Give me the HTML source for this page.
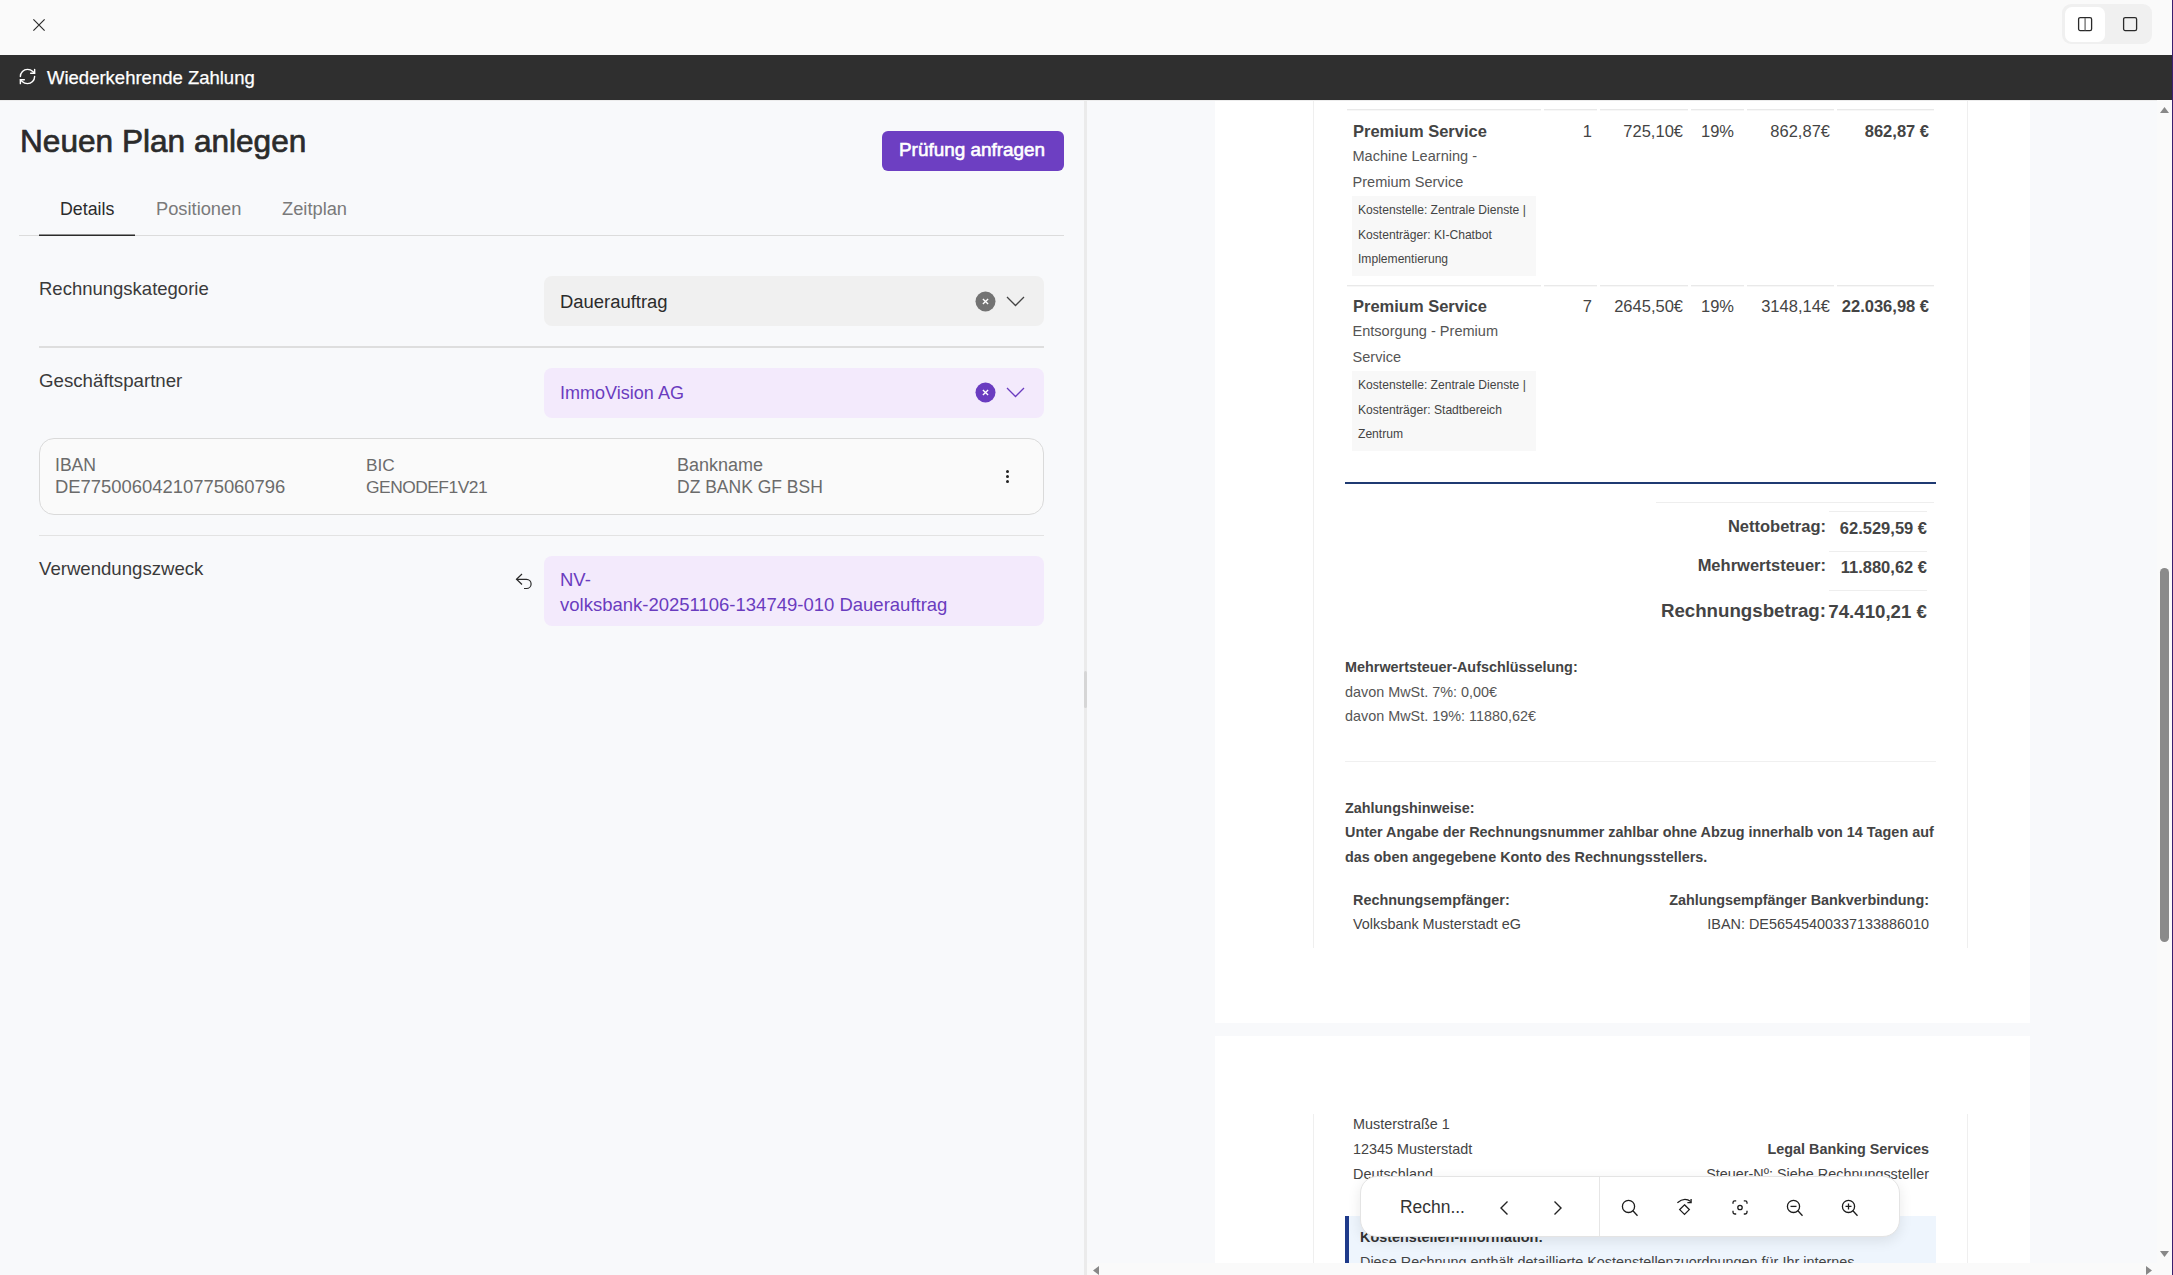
<!DOCTYPE html>
<html><head><meta charset="utf-8"><title>Wiederkehrende Zahlung</title>
<style>
html,body{margin:0;padding:0;width:2173px;height:1275px;overflow:hidden;background:#fafafa;}
body{position:relative;font-family:"Liberation Sans",sans-serif;}
.r{position:absolute;box-sizing:content-box;}
.t{position:absolute;white-space:nowrap;line-height:normal;font-family:"Liberation Sans",sans-serif;}
svg.r{overflow:visible;}
</style></head><body>
<div class="r" style="left:0px;top:0px;width:2173px;height:55px;background:#fafafa;"></div>
<div class="r" style="left:0px;top:55px;width:2173px;height:45px;background:#2f2f2f;"></div>
<div class="r" style="left:0px;top:100px;width:1084px;height:1175px;background:#f8f9fb;"></div>
<div class="r" style="left:1084px;top:100px;width:3px;height:1175px;background:#ebebeb;"></div>
<div class="r" style="left:1084px;top:671px;width:3px;height:37px;background:#d6d6d6;border-radius:2px;"></div>
<div class="r" style="left:1087px;top:100px;width:1085px;height:1175px;background:#f8f9fb;"></div>
<div class="r" style="left:2172px;top:0px;width:1px;height:1275px;background:#3a1f6e;"></div>
<svg class="r" style="left:31px;top:17px" width="16" height="16" viewBox="0 0 16 16"><path d="M2.4 2.4 L13.6 13.6 M13.6 2.4 L2.4 13.6" stroke="#2a2a2a" stroke-width="1.15" fill="none"/></svg>
<div class="r" style="left:2062px;top:4px;width:90px;height:40px;background:#f0f0f0;border-radius:9px;"></div>
<div class="r" style="left:2065px;top:7px;width:40px;height:35px;background:#ffffff;border-radius:7px;"></div>
<svg class="r" style="left:2077px;top:16px" width="16" height="16" viewBox="0 0 16 16"><rect x="1.6" y="1.6" width="13" height="13" rx="1.6" stroke="#2a2a2a" stroke-width="1.3" fill="none"/><line x1="8.1" y1="2" x2="8.1" y2="14.2" stroke="#777" stroke-width="1.4"/></svg>
<svg class="r" style="left:2122px;top:16px" width="16" height="16" viewBox="0 0 16 16"><rect x="1.6" y="1.6" width="13" height="13" rx="1.6" stroke="#2a2a2a" stroke-width="1.3" fill="none"/></svg>
<svg class="r" style="left:18.4px;top:67.4px" width="19" height="19" viewBox="0 0 24 24" fill="none" stroke="#fff" stroke-width="1.8" stroke-linecap="round" stroke-linejoin="round"><path d="M3 12a9 9 0 0 1 9-9 9.75 9.75 0 0 1 6.74 2.74L21 8"/><path d="M21 3v5h-5"/><path d="M21 12a9 9 0 0 1-9 9 9.75 9.75 0 0 1-6.74-2.74L3 16"/><path d="M8 16H3v5"/></svg>
<div class="t" style="left:47px;top:67.26px;font-size:18.5px;font-weight:normal;color:#ffffff;-webkit-text-stroke:0.25px #fff;">Wiederkehrende Zahlung</div>
<div class="t" style="left:20px;top:123.40px;font-size:31.6px;font-weight:normal;color:#2b2b2b;-webkit-text-stroke:0.7px #2b2b2b;">Neuen Plan anlegen</div>
<div class="r" style="left:882px;top:131px;width:182px;height:40px;background:#6d3fc2;border-radius:6px;"></div>
<div class="t" style="left:899px;top:138.90px;font-size:18.9px;font-weight:normal;color:#ffffff;-webkit-text-stroke:0.6px #fff;">Prüfung anfragen</div>
<div class="t" style="left:60px;top:198.89px;font-size:17.8px;font-weight:normal;color:#2b2b2b;">Details</div>
<div class="t" style="left:156px;top:198.44px;font-size:18.3px;font-weight:normal;color:#7a7a7a;">Positionen</div>
<div class="t" style="left:282px;top:198.44px;font-size:18.3px;font-weight:normal;color:#7a7a7a;">Zeitplan</div>
<div class="r" style="left:19px;top:235px;width:1045px;height:1px;background:#dcdcdc;"></div>
<div class="r" style="left:39px;top:234px;width:96px;height:1px;background:#8f8f8f;"></div>
<div class="r" style="left:39px;top:235px;width:96px;height:1px;background:#2b2b2b;"></div>
<div class="t" style="left:39px;top:278.26px;font-size:18.5px;font-weight:normal;color:#3a3a3a;">Rechnungskategorie</div>
<div class="r" style="left:544px;top:276px;width:500px;height:50px;background:#f0f0f0;border-radius:8px;"></div>
<div class="t" style="left:560px;top:291.30px;font-size:18.45px;font-weight:normal;color:#2b2b2b;">Dauerauftrag</div>
<svg class="r" style="left:975px;top:291px" width="21" height="21" viewBox="0 0 21 21"><circle cx="10.5" cy="10.5" r="10" fill="#737373"/><path d="M7.9 7.9 L13.1 13.1 M13.1 7.9 L7.9 13.1" stroke="#fff" stroke-width="1.35"/></svg>
<svg class="r" style="left:1006px;top:295px" width="19" height="13" viewBox="0 0 19 13"><path d="M1 2 L9.5 10.5 L18 2" stroke="#444" stroke-width="1.3" fill="none"/></svg>
<div class="r" style="left:39px;top:346px;width:1005px;height:2px;background:#dedede;"></div>
<div class="t" style="left:39px;top:370.08px;font-size:18.7px;font-weight:normal;color:#3a3a3a;">Geschäftspartner</div>
<div class="r" style="left:544px;top:368px;width:500px;height:50px;background:#f3eafc;border-radius:8px;"></div>
<div class="t" style="left:560px;top:382.67px;font-size:18.04px;font-weight:normal;color:#6a3cbf;">ImmoVision AG</div>
<svg class="r" style="left:975px;top:382px" width="21" height="21" viewBox="0 0 21 21"><circle cx="10.5" cy="10.5" r="10" fill="#6a3cc0"/><path d="M7.9 7.9 L13.1 13.1 M13.1 7.9 L7.9 13.1" stroke="#fff" stroke-width="1.35"/></svg>
<svg class="r" style="left:1006px;top:386px" width="19" height="13" viewBox="0 0 19 13"><path d="M1 2 L9.5 10.5 L18 2" stroke="#6a3cc0" stroke-width="1.3" fill="none"/></svg>
<div class="r" style="left:39px;top:438px;width:1003px;height:75px;border:1px solid #dadada;border-radius:15px;background:#fafafa;"></div>
<div class="t" style="left:55px;top:455.07px;font-size:17.6px;font-weight:normal;color:#6b6b6b;">IBAN</div>
<div class="t" style="left:55px;top:476.33px;font-size:18.42px;font-weight:normal;color:#6b6b6b;">DE77500604210775060796</div>
<div class="t" style="left:366px;top:455.34px;font-size:17.3px;font-weight:normal;color:#6b6b6b;">BIC</div>
<div class="t" style="left:366px;top:477.25px;font-size:17.4px;font-weight:normal;color:#6b6b6b;letter-spacing:-0.5px;">GENODEF1V21</div>
<div class="t" style="left:677px;top:454.71px;font-size:18px;font-weight:normal;color:#6b6b6b;">Bankname</div>
<div class="t" style="left:677px;top:477.16px;font-size:17.5px;font-weight:normal;color:#6b6b6b;">DZ BANK GF BSH</div>
<div class="r" style="left:1006.25px;top:470.1px;width:3px;height:3px;border-radius:50%;background:#222;"></div>
<div class="r" style="left:1006.25px;top:475.2px;width:3px;height:3px;border-radius:50%;background:#222;"></div>
<div class="r" style="left:1006.25px;top:480.2px;width:3px;height:3px;border-radius:50%;background:#222;"></div>
<div class="r" style="left:39px;top:535px;width:1005px;height:1px;background:#e3e3e3;"></div>
<div class="t" style="left:39px;top:558.17px;font-size:18.6px;font-weight:normal;color:#3a3a3a;">Verwendungszweck</div>
<svg class="r" style="left:513px;top:571px" width="21" height="21" viewBox="0 0 21 21"><path d="M9 3 L3.5 8.3 L9 13.5" stroke="#2a2a2a" stroke-width="1.2" fill="none"/><path d="M3.5 8.3 H13.5 A4.5 4.5 0 0 1 13.5 17.5 H11" stroke="#2a2a2a" stroke-width="1.2" fill="none"/></svg>
<div class="r" style="left:544px;top:556px;width:500px;height:70px;background:#f3eafc;border-radius:8px;"></div>
<div class="t" style="left:560px;top:569.26px;font-size:18.5px;font-weight:normal;color:#6a3cbf;">NV-</div>
<div class="t" style="left:560px;top:594.26px;font-size:18.5px;font-weight:normal;color:#6a3cbf;">volksbank-20251106-134749-010 Dauerauftrag</div>
<div class="r" style="left:1215px;top:100px;width:815px;height:923px;background:#ffffff;"></div>
<div class="r" style="left:1215px;top:1036px;width:815px;height:227px;background:#ffffff;"></div>
<div class="r" style="left:1313px;top:100px;width:1px;height:848px;background:#efefef;"></div>
<div class="r" style="left:1967px;top:100px;width:1px;height:848px;background:#efefef;"></div>
<div class="r" style="left:1313px;top:1114px;width:1px;height:149px;background:#efefef;"></div>
<div class="r" style="left:1967px;top:1114px;width:1px;height:149px;background:#efefef;"></div>
<div class="r" style="left:1347px;top:109px;width:194px;height:1px;background:#e9e9e9;"></div>
<div class="r" style="left:1347px;top:110px;width:194px;height:1px;background:#f7f7f7;"></div>
<div class="r" style="left:1544px;top:109px;width:53px;height:1px;background:#e9e9e9;"></div>
<div class="r" style="left:1544px;top:110px;width:53px;height:1px;background:#f7f7f7;"></div>
<div class="r" style="left:1600px;top:109px;width:88px;height:1px;background:#e9e9e9;"></div>
<div class="r" style="left:1600px;top:110px;width:88px;height:1px;background:#f7f7f7;"></div>
<div class="r" style="left:1691px;top:109px;width:53px;height:1px;background:#e9e9e9;"></div>
<div class="r" style="left:1691px;top:110px;width:53px;height:1px;background:#f7f7f7;"></div>
<div class="r" style="left:1747px;top:109px;width:87px;height:1px;background:#e9e9e9;"></div>
<div class="r" style="left:1747px;top:110px;width:87px;height:1px;background:#f7f7f7;"></div>
<div class="r" style="left:1837px;top:109px;width:97px;height:1px;background:#e9e9e9;"></div>
<div class="r" style="left:1837px;top:110px;width:97px;height:1px;background:#f7f7f7;"></div>
<div class="r" style="left:1347px;top:285px;width:194px;height:1px;background:#e9e9e9;"></div>
<div class="r" style="left:1347px;top:286px;width:194px;height:1px;background:#f7f7f7;"></div>
<div class="r" style="left:1544px;top:285px;width:53px;height:1px;background:#e9e9e9;"></div>
<div class="r" style="left:1544px;top:286px;width:53px;height:1px;background:#f7f7f7;"></div>
<div class="r" style="left:1600px;top:285px;width:88px;height:1px;background:#e9e9e9;"></div>
<div class="r" style="left:1600px;top:286px;width:88px;height:1px;background:#f7f7f7;"></div>
<div class="r" style="left:1691px;top:285px;width:53px;height:1px;background:#e9e9e9;"></div>
<div class="r" style="left:1691px;top:286px;width:53px;height:1px;background:#f7f7f7;"></div>
<div class="r" style="left:1747px;top:285px;width:87px;height:1px;background:#e9e9e9;"></div>
<div class="r" style="left:1747px;top:286px;width:87px;height:1px;background:#f7f7f7;"></div>
<div class="r" style="left:1837px;top:285px;width:97px;height:1px;background:#e9e9e9;"></div>
<div class="r" style="left:1837px;top:286px;width:97px;height:1px;background:#f7f7f7;"></div>
<div class="t" style="left:1353px;top:122.07px;font-size:16.5px;font-weight:bold;color:#444;">Premium Service</div>
<div class="t" style="left:1352.5px;top:147.83px;font-size:14.55px;font-weight:normal;color:#555;">Machine Learning -</div>
<div class="t" style="left:1352.5px;top:173.83px;font-size:14.55px;font-weight:normal;color:#555;">Premium Service</div>
<div class="r" style="left:1352px;top:196px;width:184px;height:80px;background:#f8f8f8;"></div>
<div class="t" style="left:1358px;top:203.05px;font-size:12.1px;font-weight:normal;color:#444;">Kostenstelle: Zentrale Dienste |</div>
<div class="t" style="left:1358px;top:228.05px;font-size:12.1px;font-weight:normal;color:#444;">Kostenträger: KI-Chatbot</div>
<div class="t" style="left:1358px;top:252.05px;font-size:12.1px;font-weight:normal;color:#444;">Implementierung</div>
<div class="t" style="right:581px;top:122.07px;font-size:16.5px;font-weight:normal;color:#444;">1</div>
<div class="t" style="right:490px;top:122.07px;font-size:16.5px;font-weight:normal;color:#444;">725,10€</div>
<div class="t" style="left:1701px;top:122.07px;font-size:16.5px;font-weight:normal;color:#444;">19%</div>
<div class="t" style="right:343px;top:122.07px;font-size:16.5px;font-weight:normal;color:#444;">862,87€</div>
<div class="t" style="right:244px;top:122.07px;font-size:16.5px;font-weight:bold;color:#444;">862,87 €</div>
<div class="t" style="left:1353px;top:297.07px;font-size:16.5px;font-weight:bold;color:#444;">Premium Service</div>
<div class="t" style="left:1352.5px;top:322.83px;font-size:14.55px;font-weight:normal;color:#555;">Entsorgung - Premium</div>
<div class="t" style="left:1352.5px;top:348.83px;font-size:14.55px;font-weight:normal;color:#555;">Service</div>
<div class="r" style="left:1352px;top:371px;width:184px;height:80px;background:#f8f8f8;"></div>
<div class="t" style="left:1358px;top:378.05px;font-size:12.1px;font-weight:normal;color:#444;">Kostenstelle: Zentrale Dienste |</div>
<div class="t" style="left:1358px;top:403.05px;font-size:12.1px;font-weight:normal;color:#444;">Kostenträger: Stadtbereich</div>
<div class="t" style="left:1358px;top:427.05px;font-size:12.1px;font-weight:normal;color:#444;">Zentrum</div>
<div class="t" style="right:581px;top:297.07px;font-size:16.5px;font-weight:normal;color:#444;">7</div>
<div class="t" style="right:490px;top:297.07px;font-size:16.5px;font-weight:normal;color:#444;">2645,50€</div>
<div class="t" style="left:1701px;top:297.07px;font-size:16.5px;font-weight:normal;color:#444;">19%</div>
<div class="t" style="right:343px;top:297.07px;font-size:16.5px;font-weight:normal;color:#444;">3148,14€</div>
<div class="t" style="right:244px;top:297.07px;font-size:16.5px;font-weight:bold;color:#444;">22.036,98 €</div>
<div class="r" style="left:1345px;top:482px;width:591px;height:2px;background:#1f3a72;"></div>
<div class="r" style="left:1656px;top:502px;width:278px;height:1px;background:#eeeeee;"></div>
<div class="r" style="left:1829px;top:511px;width:98px;height:1px;background:#eeeeee;"></div>
<div class="r" style="left:1829px;top:551px;width:98px;height:1px;background:#eeeeee;"></div>
<div class="r" style="left:1829px;top:590px;width:98px;height:1px;background:#eeeeee;"></div>
<div class="t" style="right:347px;top:517.07px;font-size:16.5px;font-weight:bold;color:#444;">Nettobetrag:</div>
<div class="t" style="right:246px;top:519.07px;font-size:16.5px;font-weight:bold;color:#444;">62.529,59 €</div>
<div class="t" style="right:347px;top:556.07px;font-size:16.5px;font-weight:bold;color:#444;">Mehrwertsteuer:</div>
<div class="t" style="right:246px;top:558.07px;font-size:16.5px;font-weight:bold;color:#444;">11.880,62 €</div>
<div class="t" style="right:347px;top:600.08px;font-size:18.7px;font-weight:bold;color:#444;">Rechnungsbetrag:</div>
<div class="t" style="right:246px;top:601.08px;font-size:18.7px;font-weight:bold;color:#444;">74.410,21 €</div>
<div class="t" style="left:1345px;top:658.97px;font-size:14.4px;font-weight:bold;color:#444;">Mehrwertsteuer-Aufschlüsselung:</div>
<div class="t" style="left:1345px;top:683.97px;font-size:14.4px;font-weight:normal;color:#555;">davon MwSt. 7%: 0,00€</div>
<div class="t" style="left:1345px;top:707.97px;font-size:14.4px;font-weight:normal;color:#555;">davon MwSt. 19%: 11880,62€</div>
<div class="r" style="left:1345px;top:761px;width:591px;height:1px;background:#f0f0f0;"></div>
<div class="t" style="left:1345px;top:799.97px;font-size:14.4px;font-weight:bold;color:#444;">Zahlungshinweise:</div>
<div class="t" style="left:1345px;top:823.97px;font-size:14.4px;font-weight:bold;color:#444;">Unter Angabe der Rechnungsnummer zahlbar ohne Abzug innerhalb von 14 Tagen auf</div>
<div class="t" style="left:1345px;top:848.97px;font-size:14.4px;font-weight:bold;color:#444;">das oben angegebene Konto des Rechnungsstellers.</div>
<div class="t" style="left:1353px;top:891.97px;font-size:14.4px;font-weight:bold;color:#444;">Rechnungsempfänger:</div>
<div class="t" style="right:244px;top:891.97px;font-size:14.4px;font-weight:bold;color:#444;">Zahlungsempfänger Bankverbindung:</div>
<div class="t" style="left:1353px;top:915.97px;font-size:14.4px;font-weight:normal;color:#444;">Volksbank Musterstadt eG</div>
<div class="t" style="right:244px;top:915.97px;font-size:14.4px;font-weight:normal;color:#444;">IBAN: DE56545400337133886010</div>
<div class="t" style="left:1353px;top:1115.97px;font-size:14.4px;font-weight:normal;color:#444;">Musterstraße 1</div>
<div class="t" style="left:1353px;top:1140.97px;font-size:14.4px;font-weight:normal;color:#444;">12345 Musterstadt</div>
<div class="t" style="left:1353px;top:1165.97px;font-size:14.4px;font-weight:normal;color:#444;">Deutschland</div>
<div class="t" style="right:244px;top:1140.97px;font-size:14.4px;font-weight:bold;color:#444;">Legal Banking Services</div>
<div class="t" style="right:244px;top:1165.97px;font-size:14.4px;font-weight:normal;color:#444;">Steuer-Nº: Siehe Rechnungssteller</div>
<div class="r" style="left:1345px;top:1216px;width:591px;height:47px;background:#eef5fd;"></div>
<div class="r" style="left:1345px;top:1216px;width:4px;height:47px;background:#1e3a8a;"></div>
<div class="t" style="left:1360px;top:1228.97px;font-size:14.4px;font-weight:bold;color:#333;">Kostenstellen-Information:</div>
<div class="t" style="left:1360px;top:1253.97px;font-size:14.4px;font-weight:normal;color:#444;">Diese Rechnung enthält detaillierte Kostenstellenzuordnungen für Ihr internes</div>
<div class="r" style="left:0px;top:100px;width:2172px;height:1px;background:#ececec;"></div>
<div class="r" style="left:2157px;top:100px;width:15px;height:1163px;background:#fafafa;"></div>
<div class="r" style="left:2160px;top:568px;width:9px;height:374px;border-radius:5px;background:#8a8a8a;"></div>
<svg class="r" style="left:2159px;top:106px" width="11" height="8"><path d="M1 7 L5.5 1 L10 7 Z" fill="#888"/></svg>
<svg class="r" style="left:2159px;top:1250px" width="11" height="8"><path d="M1 1 L5.5 7 L10 1 Z" fill="#888"/></svg>
<div class="r" style="left:1087px;top:1263px;width:1085px;height:12px;background:#fafafa;"></div>
<svg class="r" style="left:1092px;top:1265px" width="8" height="11"><path d="M7 1 L1 5.5 L7 10 Z" fill="#888"/></svg>
<svg class="r" style="left:2145px;top:1265px" width="8" height="11"><path d="M1 1 L7 5.5 L1 10 Z" fill="#888"/></svg>
<div class="r" style="left:1360px;top:1176px;width:538px;height:59px;border:1px solid #e4e4e4;border-radius:17px;background:#fff;box-shadow:0 4px 14px rgba(0,0,0,0.09);"></div>
<div class="t" style="left:1400px;top:1197.21px;font-size:17.45px;font-weight:normal;color:#333;">Rechn...</div>
<svg class="r" style="left:1497px;top:1199px" width="14" height="18" viewBox="0 0 14 18"><path d="M10.5 2.5 L4 9 L10.5 15.5" stroke="#222" stroke-width="1.4" fill="none"/></svg>
<svg class="r" style="left:1551px;top:1199px" width="14" height="18" viewBox="0 0 14 18"><path d="M3.5 2.5 L10 9 L3.5 15.5" stroke="#222" stroke-width="1.4" fill="none"/></svg>
<div class="r" style="left:1599px;top:1177px;width:1px;height:59px;background:#e6e6e6;"></div>
<svg class="r" style="left:1620px;top:1197px" width="20" height="22" viewBox="0 0 20 22"><circle cx="8.5" cy="9.4" r="6.1" stroke="#1c1c1c" stroke-width="1.3" fill="none"/><path d="M12.9 13.8 L17.5 18.7" stroke="#1c1c1c" stroke-width="1.3" fill="none"/></svg>
<svg class="r" style="left:1674px;top:1195px" width="22" height="24" viewBox="0 0 22 24"><path d="M3.4 7.8 Q10.3 1.6 16.8 6.6" stroke="#1c1c1c" stroke-width="1.3" fill="none"/><path d="M17.1 4 V7.6 H13.4" stroke="#1c1c1c" stroke-width="1.3" fill="none"/><path d="M10.5 9.8 L15.3 14.6 L10.5 19.4 L5.7 14.6 Z" stroke="#1c1c1c" stroke-width="1.3" fill="none"/></svg>
<svg class="r" style="left:1730px;top:1198px" width="20" height="19" viewBox="0 0 20 19"><path d="M3 5.8 V4.6 A1.8 1.8 0 0 1 4.8 2.8 H6.2 M13.8 2.8 H15.2 A1.8 1.8 0 0 1 17 4.6 V5.8 M17 12.8 V14.2 A1.8 1.8 0 0 1 15.2 16 H13.8 M6.2 16 H4.8 A1.8 1.8 0 0 1 3 14.2 V12.8" stroke="#1c1c1c" stroke-width="1.3" fill="none"/><circle cx="10" cy="9.5" r="2.2" stroke="#1c1c1c" stroke-width="1.3" fill="none"/></svg>
<svg class="r" style="left:1785px;top:1197px" width="20" height="22" viewBox="0 0 20 22"><circle cx="8.5" cy="9.4" r="6.1" stroke="#1c1c1c" stroke-width="1.3" fill="none"/><path d="M12.9 13.8 L17.5 18.7" stroke="#1c1c1c" stroke-width="1.3" fill="none"/><path d="M5.5 9.4 H11.5" stroke="#1c1c1c" stroke-width="1.3" fill="none"/></svg>
<svg class="r" style="left:1840px;top:1197px" width="20" height="22" viewBox="0 0 20 22"><circle cx="8.5" cy="9.4" r="6.1" stroke="#1c1c1c" stroke-width="1.3" fill="none"/><path d="M12.9 13.8 L17.5 18.7" stroke="#1c1c1c" stroke-width="1.3" fill="none"/><path d="M5.5 9.4 H11.5 M8.5 6.4 V12.4" stroke="#1c1c1c" stroke-width="1.3" fill="none"/></svg>
</body></html>
